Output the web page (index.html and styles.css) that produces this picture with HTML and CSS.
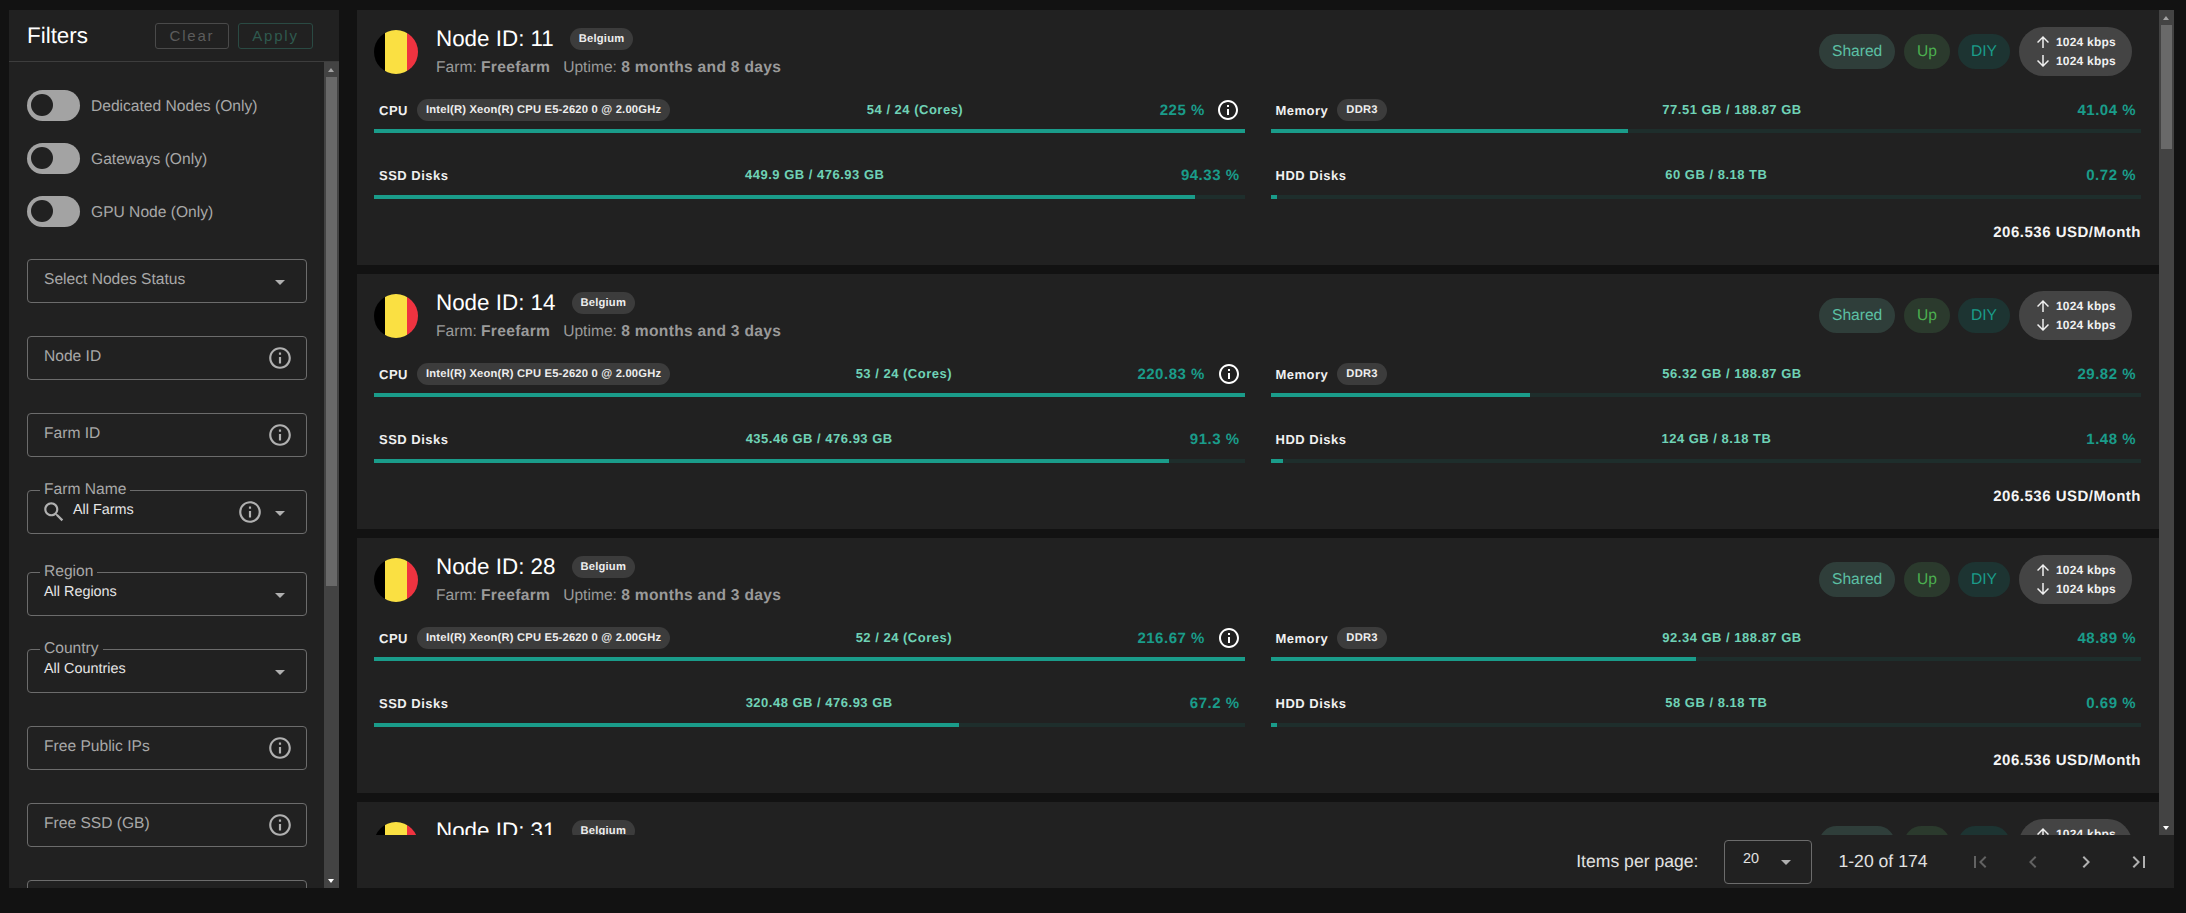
FILE: index.html
```html
<!DOCTYPE html>
<html lang="en">
<head>
    <meta charset="UTF-8">
    <meta name="viewport" content="width=device-width, initial-scale=1.0">
    <title>Nodes</title>
    <link rel="stylesheet" href="styles.css">
</head>
<body>
    <svg class="icon-defs" width="0" height="0">
        <symbol id="i-info" viewBox="0 0 24 24"><path d="M11 7h2v2h-2zm0 4h2v6h-2zm1-9C6.48 2 2 6.48 2 12s4.48 10 10 10 10-4.48 10-10S17.52 2 12 2zm0 18c-4.41 0-8-3.59-8-8s3.59-8 8-8 8 3.59 8 8-3.59 8-8 8z"/></symbol>
        <symbol id="i-search" viewBox="0 0 24 24"><path d="M15.5 14h-.79l-.28-.27C15.41 12.59 16 11.11 16 9.5 16 5.91 13.09 3 9.5 3S3 5.91 3 9.5 5.91 16 9.5 16c1.61 0 3.09-.59 4.23-1.57l.27.28v.79l5 4.99L20.49 19l-4.99-5zm-6 0C7.01 14 5 11.99 5 9.5S7.01 5 9.5 5 14 7.01 14 9.5 11.99 14 9.5 14z"/></symbol>
        <symbol id="i-up" viewBox="0 0 24 24"><path d="M4 12l1.41 1.41L11 7.83V20h2V7.83l5.58 5.59L20 12l-8-8-8 8z"/></symbol>
        <symbol id="i-down" viewBox="0 0 24 24"><path d="M20 12l-1.41-1.41L13 16.17V4h-2v12.17l-5.58-5.59L4 12l8 8 8-8z"/></symbol>
    </svg>

    <aside class="filters">
        <header class="filters-head">
            <h2>Filters</h2>
            <div class="filters-actions">
                <button class="btn btn-clear">Clear</button>
                <button class="btn btn-apply">Apply</button>
            </div>
        </header>
        <div class="filters-scroll">
            <div class="filters-body">
                <label class="switch"><span class="switch-track"><span class="switch-knob"></span></span><span class="switch-text">Dedicated Nodes (Only)</span></label>
                <label class="switch"><span class="switch-track"><span class="switch-knob"></span></span><span class="switch-text">Gateways (Only)</span></label>
                <label class="switch"><span class="switch-track"><span class="switch-knob"></span></span><span class="switch-text">GPU Node (Only)</span></label>

                <div class="field field-first">
                    <span class="placeholder">Select Nodes Status</span>
                    <span class="caret"></span>
                </div>
                <div class="field">
                    <span class="placeholder">Node ID</span>
                    <svg class="info"><use href="#i-info"/></svg>
                </div>
                <div class="field">
                    <span class="placeholder">Farm ID</span>
                    <svg class="info"><use href="#i-info"/></svg>
                </div>
                <div class="field field-search">
                    <span class="float-label">Farm Name</span>
                    <svg class="search"><use href="#i-search"/></svg>
                    <span class="value">All Farms</span>
                    <svg class="info info-select"><use href="#i-info"/></svg>
                    <span class="caret"></span>
                </div>
                <div class="field field-region">
                    <span class="float-label">Region</span>
                    <span class="value">All Regions</span>
                    <span class="caret"></span>
                </div>
                <div class="field">
                    <span class="float-label">Country</span>
                    <span class="value">All Countries</span>
                    <span class="caret"></span>
                </div>
                <div class="field">
                    <span class="placeholder">Free Public IPs</span>
                    <svg class="info"><use href="#i-info"/></svg>
                </div>
                <div class="field">
                    <span class="placeholder">Free SSD (GB)</span>
                    <svg class="info"><use href="#i-info"/></svg>
                </div>
                <div class="field"></div>
            </div>
            <div class="scrollbar">
                <span class="arrow arrow-up"></span>
                <span class="thumb thumb-filters"></span>
                <span class="arrow arrow-down"></span>
            </div>
        </div>
    </aside>

    <main class="nodes">
        <div class="nodes-scroll">
            <div class="node-list">

                <article class="node">
                    <header class="node-head">
                        <span class="flag"></span>
                        <div class="node-title">
                            <div class="node-name"><h3>Node ID: 11</h3><span class="chip">Belgium</span></div>
                            <p class="node-sub">Farm: <b>Freefarm</b><span class="sub-gap"></span>Uptime: <b>8 months and 8 days</b></p>
                        </div>
                        <div class="node-tags">
                            <span class="tag tag-shared">Shared</span>
                            <span class="tag tag-up">Up</span>
                            <span class="tag tag-diy">DIY</span>
                            <div class="speed">
                                <div class="speed-line"><svg><use href="#i-up"/></svg>1024 kbps</div>
                                <div class="speed-line"><svg><use href="#i-down"/></svg>1024 kbps</div>
                            </div>
                        </div>
                    </header>
                    <div class="metrics">
                        <div class="metric">
                            <div class="metric-row">
                                <div class="metric-name">CPU <span class="chip">Intel(R) Xeon(R) CPU E5-2620 0 @ 2.00GHz</span></div>
                                <span class="metric-value">54 / 24 (Cores)</span>
                                <div class="metric-pct">225 % <svg class="info-cpu"><use href="#i-info"/></svg></div>
                            </div>
                            <div class="bar"><div class="bar-fill" style="width: 100%"></div></div>
                        </div>
                        <div class="metric">
                            <div class="metric-row">
                                <div class="metric-name">Memory <span class="chip">DDR3</span></div>
                                <span class="metric-value">77.51 GB / 188.87 GB</span>
                                <div class="metric-pct">41.04 %</div>
                            </div>
                            <div class="bar"><div class="bar-fill" style="width: 41.04%"></div></div>
                        </div>
                        <div class="metric">
                            <div class="metric-row">
                                <div class="metric-name">SSD Disks</div>
                                <span class="metric-value">449.9 GB / 476.93 GB</span>
                                <div class="metric-pct">94.33 %</div>
                            </div>
                            <div class="bar"><div class="bar-fill" style="width: 94.33%"></div></div>
                        </div>
                        <div class="metric">
                            <div class="metric-row">
                                <div class="metric-name">HDD Disks</div>
                                <span class="metric-value">60 GB / 8.18 TB</span>
                                <div class="metric-pct">0.72 %</div>
                            </div>
                            <div class="bar"><div class="bar-fill" style="width: 0.72%"></div></div>
                        </div>
                    </div>
                    <p class="price">206.536 USD/Month</p>
                </article>

                <article class="node">
                    <header class="node-head">
                        <span class="flag"></span>
                        <div class="node-title">
                            <div class="node-name"><h3>Node ID: 14</h3><span class="chip">Belgium</span></div>
                            <p class="node-sub">Farm: <b>Freefarm</b><span class="sub-gap"></span>Uptime: <b>8 months and 3 days</b></p>
                        </div>
                        <div class="node-tags">
                            <span class="tag tag-shared">Shared</span>
                            <span class="tag tag-up">Up</span>
                            <span class="tag tag-diy">DIY</span>
                            <div class="speed">
                                <div class="speed-line"><svg><use href="#i-up"/></svg>1024 kbps</div>
                                <div class="speed-line"><svg><use href="#i-down"/></svg>1024 kbps</div>
                            </div>
                        </div>
                    </header>
                    <div class="metrics">
                        <div class="metric">
                            <div class="metric-row">
                                <div class="metric-name">CPU <span class="chip">Intel(R) Xeon(R) CPU E5-2620 0 @ 2.00GHz</span></div>
                                <span class="metric-value">53 / 24 (Cores)</span>
                                <div class="metric-pct">220.83 % <svg class="info-cpu"><use href="#i-info"/></svg></div>
                            </div>
                            <div class="bar"><div class="bar-fill" style="width: 100%"></div></div>
                        </div>
                        <div class="metric">
                            <div class="metric-row">
                                <div class="metric-name">Memory <span class="chip">DDR3</span></div>
                                <span class="metric-value">56.32 GB / 188.87 GB</span>
                                <div class="metric-pct">29.82 %</div>
                            </div>
                            <div class="bar"><div class="bar-fill" style="width: 29.82%"></div></div>
                        </div>
                        <div class="metric">
                            <div class="metric-row">
                                <div class="metric-name">SSD Disks</div>
                                <span class="metric-value">435.46 GB / 476.93 GB</span>
                                <div class="metric-pct">91.3 %</div>
                            </div>
                            <div class="bar"><div class="bar-fill" style="width: 91.3%"></div></div>
                        </div>
                        <div class="metric">
                            <div class="metric-row">
                                <div class="metric-name">HDD Disks</div>
                                <span class="metric-value">124 GB / 8.18 TB</span>
                                <div class="metric-pct">1.48 %</div>
                            </div>
                            <div class="bar"><div class="bar-fill" style="width: 1.48%"></div></div>
                        </div>
                    </div>
                    <p class="price">206.536 USD/Month</p>
                </article>

                <article class="node">
                    <header class="node-head">
                        <span class="flag"></span>
                        <div class="node-title">
                            <div class="node-name"><h3>Node ID: 28</h3><span class="chip">Belgium</span></div>
                            <p class="node-sub">Farm: <b>Freefarm</b><span class="sub-gap"></span>Uptime: <b>8 months and 3 days</b></p>
                        </div>
                        <div class="node-tags">
                            <span class="tag tag-shared">Shared</span>
                            <span class="tag tag-up">Up</span>
                            <span class="tag tag-diy">DIY</span>
                            <div class="speed">
                                <div class="speed-line"><svg><use href="#i-up"/></svg>1024 kbps</div>
                                <div class="speed-line"><svg><use href="#i-down"/></svg>1024 kbps</div>
                            </div>
                        </div>
                    </header>
                    <div class="metrics">
                        <div class="metric">
                            <div class="metric-row">
                                <div class="metric-name">CPU <span class="chip">Intel(R) Xeon(R) CPU E5-2620 0 @ 2.00GHz</span></div>
                                <span class="metric-value">52 / 24 (Cores)</span>
                                <div class="metric-pct">216.67 % <svg class="info-cpu"><use href="#i-info"/></svg></div>
                            </div>
                            <div class="bar"><div class="bar-fill" style="width: 100%"></div></div>
                        </div>
                        <div class="metric">
                            <div class="metric-row">
                                <div class="metric-name">Memory <span class="chip">DDR3</span></div>
                                <span class="metric-value">92.34 GB / 188.87 GB</span>
                                <div class="metric-pct">48.89 %</div>
                            </div>
                            <div class="bar"><div class="bar-fill" style="width: 48.89%"></div></div>
                        </div>
                        <div class="metric">
                            <div class="metric-row">
                                <div class="metric-name">SSD Disks</div>
                                <span class="metric-value">320.48 GB / 476.93 GB</span>
                                <div class="metric-pct">67.2 %</div>
                            </div>
                            <div class="bar"><div class="bar-fill" style="width: 67.2%"></div></div>
                        </div>
                        <div class="metric">
                            <div class="metric-row">
                                <div class="metric-name">HDD Disks</div>
                                <span class="metric-value">58 GB / 8.18 TB</span>
                                <div class="metric-pct">0.69 %</div>
                            </div>
                            <div class="bar"><div class="bar-fill" style="width: 0.69%"></div></div>
                        </div>
                    </div>
                    <p class="price">206.536 USD/Month</p>
                </article>

                <article class="node">
                    <header class="node-head">
                        <span class="flag"></span>
                        <div class="node-title">
                            <div class="node-name"><h3>Node ID: 31</h3><span class="chip">Belgium</span></div>
                            <div class="node-sub-empty"></div>
                        </div>
                        <div class="node-tags">
                            <span class="tag tag-shared">Shared</span>
                            <span class="tag tag-up">Up</span>
                            <span class="tag tag-diy">DIY</span>
                            <div class="speed">
                                <div class="speed-line"><svg><use href="#i-up"/></svg>1024 kbps</div>
                                <div class="speed-line"><svg><use href="#i-down"/></svg>1024 kbps</div>
                            </div>
                        </div>
                    </header>
                </article>

            </div>
            <div class="scrollbar">
                <span class="arrow arrow-up"></span>
                <span class="thumb thumb-nodes"></span>
                <span class="arrow arrow-down"></span>
            </div>
        </div>

        <footer class="pager">
            <span class="pager-label">Items per page:</span>
            <div class="pager-select"><span>20</span><span class="caret"></span></div>
            <span>1-20 of 174</span>
            <div class="pager-nav">
                <svg class="nav-off" viewBox="0 0 24 24"><path d="M18.41 16.59L13.82 12l4.59-4.59L17 6l-6 6 6 6zM6 6h2v12H6z"/></svg>
                <svg class="nav-off" viewBox="0 0 24 24"><path d="M15.41 7.41L14 6l-6 6 6 6 1.41-1.41L10.83 12z"/></svg>
                <svg viewBox="0 0 24 24"><path d="M10 6L8.59 7.41 13.17 12l-4.58 4.59L10 18l6-6z"/></svg>
                <svg viewBox="0 0 24 24"><path d="M5.59 7.41L10.18 12l-4.59 4.59L7 18l6-6-6-6zM16 6h2v12h-2z"/></svg>
            </div>
        </footer>
    </main>
</body>
</html>
```

FILE: styles.css
```css
* { box-sizing: border-box; }
html, body { height: 100%; }
body { margin: 0; padding: 10px 12px 25px 9px; display: flex; gap: 18px; overflow: hidden; background: #121212; color: #fff; font-family: "Liberation Sans", Arial, sans-serif; text-rendering: geometricPrecision; }
h2, h3, p { margin: 0; font-weight: 400; }
svg { fill: currentColor; }
.icon-defs { position: absolute; }

/* filters panel */
.filters { width: 330px; flex: none; display: flex; flex-direction: column; background: #212121; }
.filters-head { height: 52px; flex: none; display: flex; align-items: center; justify-content: space-between; padding: 0 26px 0 18px; border-bottom: 1px solid #3d3d3d; }
.filters-head h2 { font-size: 22.4px; }
.filters-actions { display: flex; gap: 9px; }
.btn { height: 26px; padding: 0; background: none; border: 1px solid #4a4a4a; border-radius: 3px; font: 15px "Liberation Sans", Arial, sans-serif; letter-spacing: 1.8px; color: #5c5c5c; }
.btn-clear { width: 74px; }
.btn-apply { width: 75px; border-color: #2a4a43; color: #2f5a4f; }

.filters-scroll { flex: 1; min-height: 0; display: flex; }
.filters-body { flex: 1; min-width: 0; overflow: hidden; padding: 28px 17px 0 18px; }

.switch { height: 31px; margin-bottom: 22px; display: flex; align-items: center; gap: 11px; font-size: 15.6px; color: #a8a8a8; }
.switch-text { padding-top: 2px; }
.switch-track { width: 53px; height: 31px; padding: 4px; border-radius: 16px; background: #a3a3a3; }
.switch-knob { display: block; width: 22px; height: 22px; border-radius: 50%; background: #212121; }

.field { position: relative; height: 44px; margin-bottom: 33px; padding: 0 13px 0 16px; display: flex; align-items: center; border: 1px solid #6c6c6c; border-radius: 4px; }
.field-first { margin-top: 32px; }
.field-search { margin-bottom: 38px; }
.placeholder { flex: 1; padding-bottom: 2px; font-size: 15.6px; color: #a8a8a8; }
.value { flex: 1; padding-bottom: 5px; font-size: 14.4px; color: #e6e6e6; }
.float-label { position: absolute; top: -9px; left: 12px; padding: 0 4px; background: #212121; font-size: 15.6px; line-height: 16px; color: #a8a8a8; }
.info { width: 26px; height: 26px; color: #b0b0b0; }
.info-select { margin-right: 4px; }
.search { width: 26px; height: 26px; margin: 0 6px 0 -3px; color: #b0b0b0; }
.caret { width: 0; height: 0; margin: 2px 8px 0 8px; border-style: solid; border-width: 5px 5px 0; border-color: #b0b0b0 transparent transparent; }

/* fake scrollbars, the sandbox browser draws none with arrows */
.scrollbar { width: 15px; flex: none; display: flex; flex-direction: column; align-items: center; background: #434343; }
.arrow { flex: none; width: 15px; height: 15px; position: relative; }
.arrow::after { content: ""; position: absolute; left: 4px; top: 6px; border-style: solid; border-color: transparent; border-width: 0 3.5px 4px; border-bottom-color: #a3a3a3; }
.arrow-down { margin-top: auto; }
.arrow-down::after { border-width: 4px 3.5px 0; border-top-color: #fff; border-bottom-color: transparent; }
.thumb { width: 11px; background: #696969; }
.thumb-filters { height: 509px; }
.thumb-nodes { height: 124px; }

/* nodes */
.nodes { flex: 1; min-width: 0; display: flex; flex-direction: column; }
.nodes-scroll { flex: 1; min-height: 0; display: flex; }
.node-list { flex: 1; min-width: 0; overflow: hidden; display: flex; flex-direction: column; gap: 9px; }
.node { height: 255px; flex: none; padding: 17px 18px 0 17px; background: #212121; }
.node-head { height: 49px; display: flex; align-items: center; }
.flag { width: 44px; height: 44px; flex: none; margin-right: 18px; border-radius: 50%; background: linear-gradient(90deg, #000 25%, #fae042 25%, #fae042 75%, #ef3340 75%); }
.node-title { flex: 1; }
.node-name { display: flex; align-items: center; gap: 16px; }
.node-name .chip { margin-top: 1px; }
.node-name h3 { font-size: 22.4px; line-height: 26px; }
.node-sub { margin-top: 6px; font-size: 15.6px; line-height: 20px; color: #9a9a9a; }
.node-sub-empty { height: 26px; }
.node-sub b { letter-spacing: .3px; }
.sub-gap { display: inline-block; width: 13px; }
.chip { display: inline-flex; align-items: center; height: 22px; padding: 0 9px; border-radius: 11px; background: #3c3c3c; font-size: 11.2px; font-weight: 700; letter-spacing: .2px; color: #eee; }

.node-tags { display: flex; align-items: center; gap: 9px; margin-right: 9px; }
.tag { height: 35px; padding: 0 13px; display: flex; align-items: center; border-radius: 18px; font-size: 15.6px; }
.tag-shared { width: 76px; background: #2f3e3a; color: #5cc0a4; }
.tag-up { width: 46px; margin-right: -1px; background: #2b3a2d; color: #4caf50; }
.tag-diy { width: 52px; background: #1d3432; color: #1a9c8a; }
.speed { width: 113px; height: 49px; padding-left: 15px; display: flex; flex-direction: column; justify-content: center; gap: 1px; border-radius: 25px; background: #444; }
.speed-line { height: 18px; display: flex; align-items: center; gap: 4px; font-size: 12px; font-weight: 700; letter-spacing: .2px; color: #f0f0f0; }
.speed-line svg { width: 18px; height: 18px; flex: none; }

.metrics { margin-top: 23px; display: grid; grid-template-columns: 1fr 1fr; column-gap: 26px; row-gap: 32px; }
.metric-row { height: 22px; margin-bottom: 8px; padding: 0 5px; display: flex; align-items: center; justify-content: space-between; }
.metric:nth-child(n+3) .metric-row { padding-bottom: 2px; }
.metric-name { display: flex; align-items: center; gap: 9px; font-size: 13px; font-weight: 700; letter-spacing: .5px; color: #f0f0f0; }
.metric-value { padding-bottom: 2px; font-size: 13px; font-weight: 700; letter-spacing: .5px; color: #6fd2b6; }
.metric-pct { display: flex; align-items: center; gap: 7px; white-space: pre; font-size: 15px; font-weight: 700; letter-spacing: .5px; color: #1a9c8a; }
.info-cpu { width: 24px; height: 24px; margin: -1px -1px -1px 0; color: #fff; }
.bar { height: 4px; background: #1e2e2c; }
.bar-fill { height: 100%; background: #1a9c8a; }
.price { margin-top: 25px; text-align: right; font-size: 15px; font-weight: 700; letter-spacing: .5px; color: #f5f5f5; }

/* pagination */
.pager { height: 53px; flex: none; padding: 0 9px 0 0; display: flex; align-items: center; justify-content: flex-end; gap: 26.5px; background: #212121; font-size: 17.6px; color: #e2e2e2; }
.pager-label { margin-right: -1px; }
.pager-select { width: 88px; height: 44px; padding: 0 0 0 18px; display: flex; align-items: center; justify-content: space-between; border: 1px solid #6c6c6c; border-radius: 4px; font-size: 14.4px; }
.pager-select span:first-child { padding-bottom: 6px; }
.pager-select .caret { margin-right: 20px; }
.pager-nav { display: flex; margin-left: -1px; }
.pager-nav svg { width: 24px; height: 24px; margin: 0 14.5px; color: #b0b0b0; }
.pager-nav .nav-off { color: #626262; }
```
